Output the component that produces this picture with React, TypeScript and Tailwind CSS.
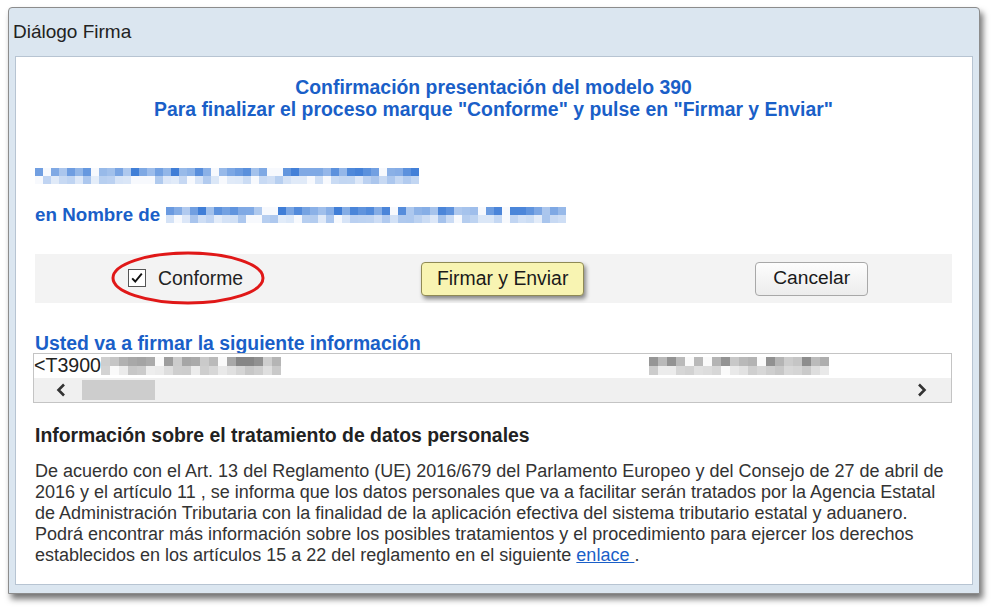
import React from 'react';

// deterministic pseudo-random mosaic used for the blurred (pixelated) data
function rand(seed: number) {
  let s = seed;
  return () => {
    s = (s * 9301 + 49297) % 233280;
    return s / 233280;
  };
}

interface MosaicProps {
  width: number;
  seed: number;
  tone: 'blue' | 'gray';
  cell?: number;
}

function Mosaic({ width, seed, tone, cell = 8 }: MosaicProps) {
  const r = rand(seed);
  const cols = Math.floor(width / cell);
  const base = tone === 'blue' ? [40, 110, 210] : [120, 120, 120];
  const rows = [0, 1];
  return (
    <div className="flex flex-col shrink-0">
      {rows.map((row) => (
        <div key={row} className="flex">
          {Array.from({ length: cols }).map((_, i) => {
            const gap = r() < 0.12;
            const a = gap ? 0.04 : row === 0 ? 0.35 + r() * 0.55 : 0.12 + r() * 0.3;
            return (
              <div
                key={i}
                style={{
                  width: cell,
                  height: cell,
                  backgroundColor: `rgba(${base[0]},${base[1]},${base[2]},${a})`,
                }}
              />
            );
          })}
        </div>
      ))}
    </div>
  );
}

export default function App() {
  return (
    <div className="w-[996px] h-[611px] bg-white overflow-hidden font-['Liberation_Sans',Arial,sans-serif]">
      <div className="ml-[8px] mt-[7px] w-[972px] h-[587px] flex flex-col rounded-t-[4px] border border-[#8c8c8c] bg-[#dbe6f0] shadow-[3px_5px_6px_rgba(0,0,0,0.55)]">
        {/* title bar */}
        <div className="h-[48px] flex items-center pl-[4px] text-[19px] text-[#222]">Diálogo Firma</div>

        {/* body */}
        <div className="mx-[6px] h-[529px] bg-white border border-[#b7c4d2] pl-[19px] pr-[20px] flex flex-col">
          <div className="pt-[19px] text-center text-[19.4px] leading-[22px] font-bold text-[#1a5fc8]">
            <p>Confirmación presentación del modelo 390</p>
            <p>Para finalizar el proceso marque "Conforme" y pulse en "Firmar y Enviar"</p>
          </div>

          <div className="mt-[48px] h-[16px]">
            <Mosaic width={390} seed={7} tone="blue" />
          </div>

          <div className="mt-[23px] flex items-center gap-[6px] h-[16px]">
            <span className="text-[18.8px] font-bold text-[#1a5fc8] whitespace-nowrap">en Nombre de</span>
            <Mosaic width={400} seed={31} tone="blue" />
          </div>

          {/* actions band */}
          <div className="mt-[31px] h-[49px] bg-[#f3f3f3] flex items-center relative">
            <label className="ml-[93px] flex items-center gap-[12px] text-[19.4px] text-[#222]">
              <span className="w-[18px] h-[18px] border border-[#555] bg-white flex items-center justify-center">
                <svg viewBox="0 0 16 16" className="w-[14px] h-[14px]">
                  <path d="M2.5 8.5 L6 12 L13.5 3" fill="none" stroke="#111" strokeWidth="2.2" />
                </svg>
              </span>
              Conforme
            </label>
            <svg className="absolute left-[75px] top-[-4px] w-[156px] h-[56px]" viewBox="0 0 156 56">
              <ellipse cx="78" cy="28" rx="75" ry="25" fill="none" stroke="#e01818" strokeWidth="3" />
            </svg>
            <button className="ml-[178px] w-[163px] h-[34px] rounded-[4px] border border-[#8f8a55] bg-[#f8f4b2] text-[19.4px] text-[#1a1a1a] shadow-[2px_3px_4px_rgba(0,0,0,0.45)]">
              Firmar y Enviar
            </button>
            <button className="ml-[171px] w-[113px] h-[34px] rounded-[4px] border border-[#a8a8a8] bg-gradient-to-b from-[#fdfdfd] to-[#ececec] text-[19.2px] text-[#1a1a1a]">
              Cancelar
            </button>
          </div>

          <p className="mt-[30px] text-[19.4px] leading-[20px] font-bold text-[#1a5fc8]">Usted va a firmar la siguiente información</p>

          {/* scroll box */}
          <div className="ml-[-2px] h-[50px] border border-[#c4c4c4] flex flex-col">
            <div className="h-[24px] flex items-center text-[19.6px] text-[#222]">
              <span>&lt;T3900</span>
              <Mosaic width={184} seed={53} tone="gray" cell={9} />
              <div className="ml-[368px]">
                <Mosaic width={184} seed={91} tone="gray" cell={9} />
              </div>
            </div>
            <div className="flex-1 bg-[#f0f0f0] flex items-center">
              <svg viewBox="0 0 10 14" className="ml-[22px] w-[10px] h-[14px]">
                <path d="M8 1.5 L2.5 7 L8 12.5" fill="none" stroke="#333" strokeWidth="2.6" />
              </svg>
              <div className="ml-[16px] w-[73px] h-[20px] bg-[#cdcdcd]" />
              <svg viewBox="0 0 10 14" className="ml-auto mr-[24px] w-[10px] h-[14px]">
                <path d="M2 1.5 L7.5 7 L2 12.5" fill="none" stroke="#333" strokeWidth="2.6" />
              </svg>
            </div>
          </div>

          <p className="mt-[22px] text-[19.4px] leading-[20px] font-bold text-[#222]">Información sobre el tratamiento de datos personales</p>

          <p className="mt-[16px] text-[18px] leading-[21px] text-[#333] whitespace-nowrap">
            De acuerdo con el Art. 13 del Reglamento (UE) 2016/679 del Parlamento Europeo y del Consejo de 27 de abril de
            <br />
            2016 y el artículo 11 , se informa que los datos personales que va a facilitar serán tratados por la Agencia Estatal
            <br />
            de Administración Tributaria con la finalidad de la aplicación efectiva del sistema tributario estatal y aduanero.
            <br />
            Podrá encontrar más información sobre los posibles tratamientos y el procedimiento para ejercer los derechos
            <br />
            establecidos en los artículos 15 a 22 del reglamento en el siguiente{' '}
            <a className="text-[#1a5fc8] underline">enlace&nbsp;</a>.
          </p>
        </div>
      </div>
    </div>
  );
}
